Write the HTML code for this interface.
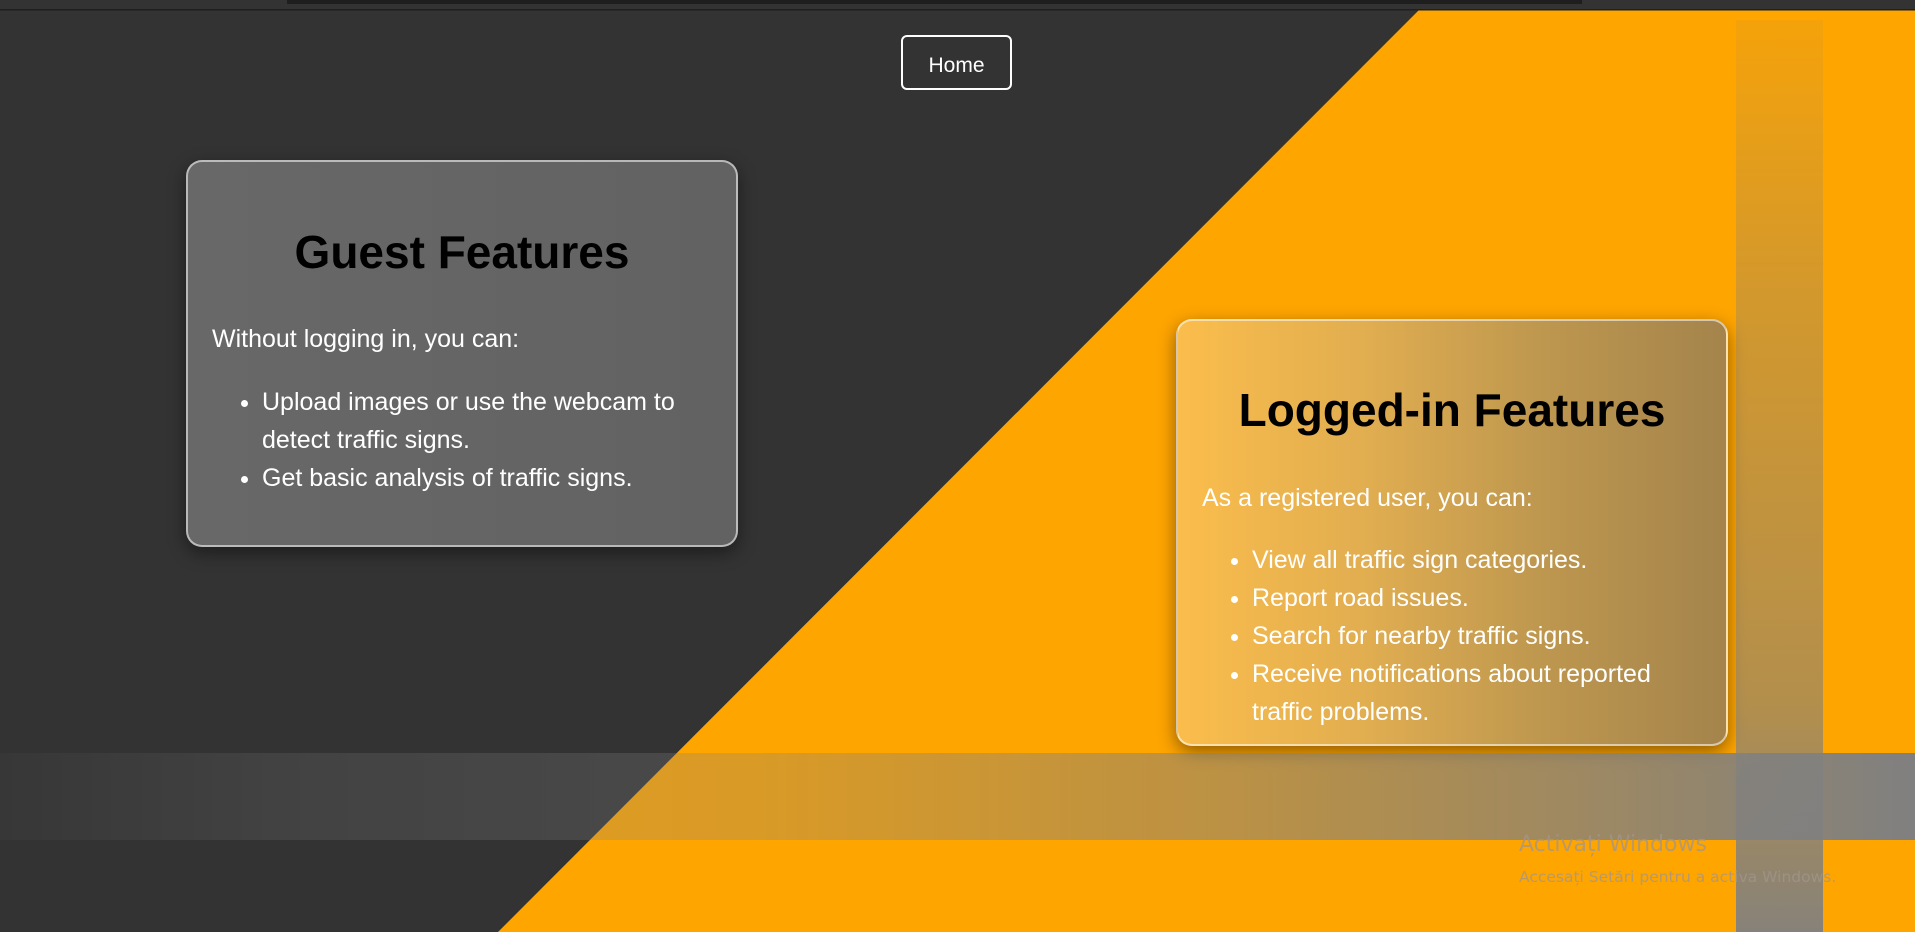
<!DOCTYPE html>
<html><head><meta charset="utf-8"><style>
html,body{margin:0;padding:0;width:1915px;height:932px;overflow:hidden;background:#333;font-family:"Liberation Sans",Arial,sans-serif}
.abs{position:absolute}
#bg{left:0;top:0}
.card{position:absolute;width:552px;border-radius:16px;box-sizing:border-box;border:2px solid rgba(255,255,255,0.55);box-shadow:0 6px 18px rgba(0,0,0,0.45);color:#fff}
.card h2{position:absolute;left:0;right:0;margin:0;text-align:center;font-size:46px;line-height:46px;font-weight:bold;color:#000}
.card p{position:absolute;left:24px;margin:0;font-size:25px;line-height:38px;white-space:nowrap}
.card ul{position:absolute;left:24px;margin:0;padding:0 0 0 50px;font-size:25px;line-height:38px;white-space:nowrap}
.card li{padding-left:0}
</style></head><body>
<svg id="bg" class="abs" width="1915" height="932">
<rect x="0" y="0" width="1915" height="932" fill="#333"/>
<polygon points="1419,10 1915,10 1915,932 498,932" fill="#ffa500"/>
<rect x="0" y="0" width="1915" height="10" fill="#333"/>
<rect x="287" y="0" width="1295" height="4" fill="#1e1e1e"/>
<rect x="0" y="9" width="1915" height="1.5" fill="#1f1f1f"/>
</svg>
<div class="abs" style="left:901px;top:35px;width:111px;height:55px;box-sizing:border-box;border:2px solid #fff;border-radius:6px;color:#fff;font-size:21px;line-height:57px;text-align:center">Home</div>

<div class="card" style="left:186px;top:160px;height:387px;background:linear-gradient(90deg,#686868,#626262)">
<h2 style="top:67px">Guest Features</h2>
<p style="top:158px">Without logging in, you can:</p>
<ul style="top:221px"><li>Upload images or use the webcam to<br>detect traffic signs.</li><li>Get basic analysis of traffic signs.</li></ul>
</div>

<div class="card" style="left:1176px;top:319px;height:427px;background:linear-gradient(90deg,#fbbd4c,#e0ad50 35%,#bf984f 65%,#a4844c)">
<h2 style="top:66px">Logged-in Features</h2>
<p style="top:158px">As a registered user, you can:</p>
<ul style="top:220px"><li>View all traffic sign categories.</li><li>Report road issues.</li><li>Search for nearby traffic signs.</li><li>Receive notifications about reported<br>traffic problems.</li></ul>
</div>

<div class="abs" style="left:1736px;top:20px;width:87px;height:912px;background:linear-gradient(180deg,rgba(128,128,128,0.08),rgba(128,128,128,0.35) 30%,rgba(128,128,128,0.6) 75%,rgba(128,128,128,0.95))"></div>
<div class="abs" style="left:0;top:753px;width:1915px;height:87px;background:linear-gradient(90deg,rgba(128,128,128,0.05),rgba(128,128,128,0.2) 15%,rgba(128,128,128,0.3) 40%,rgba(128,128,128,0.55) 65%,rgba(128,128,128,0.8) 85%,rgba(128,128,128,1))"></div>
<div class="abs" style="left:1519px;top:832px;color:rgba(160,150,140,0.75);font-size:22px;line-height:26px;font-family:'DejaVu Sans','Liberation Sans',sans-serif">Activați Windows</div>
<div class="abs" style="left:1519px;top:868px;color:rgba(160,150,140,0.75);font-size:15.5px;line-height:18px;font-family:'DejaVu Sans','Liberation Sans',sans-serif">Accesați Setări pentru a activa Windows.</div>
</body></html>
